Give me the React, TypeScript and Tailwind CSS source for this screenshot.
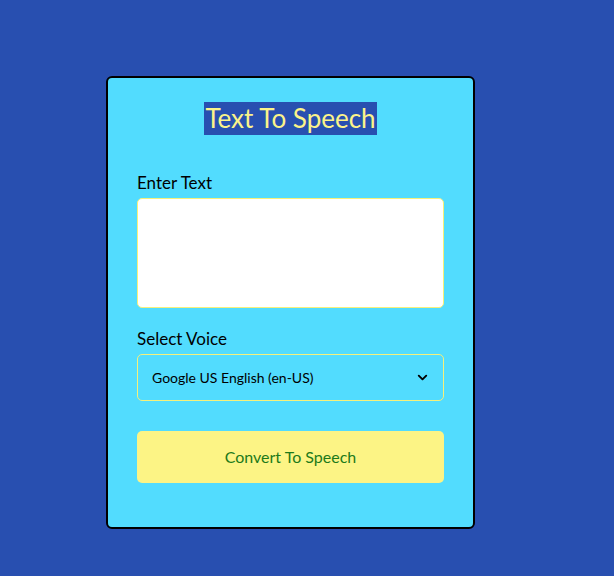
import { ChevronDown } from "lucide-react";

export default function App() {
  return (
    <div
      className="min-h-screen w-full bg-[#284fb0] pt-[76px] pl-[106px]"
      style={{ fontFamily: "Lato, 'Noto Sans', sans-serif" }}
    >
      <div className="w-[369px] rounded-[6px] border-2 border-black bg-[#52dcfe] px-[29px] pt-[24px] pb-[44px]">
        <div className="flex justify-center">
          <h1 className="bg-[#284fb0] px-[1px] text-[26px] leading-[33px] text-[#fbf38a]">
            Text To Speech
          </h1>
        </div>

        <label className="mt-[36px] block text-[17px] leading-[24px] text-black">
          Enter Text
        </label>
        <textarea className="mt-[3px] block h-[110px] w-full resize-none rounded-[5px] border border-[#f6f07a] bg-white" />

        <label className="mt-[19px] block text-[17px] leading-[24px] text-black">
          Select Voice
        </label>
        <div className="mt-[3px] flex h-[47px] w-full items-center justify-between rounded-[5px] border border-[#f6f07a] pl-[14px] pr-[13px] text-[14px] text-black">
          <span>Google US English (en-US)</span>
          <ChevronDown size={15} strokeWidth={3} />
        </div>

        <button className="mt-[30px] flex h-[52px] w-full items-center justify-center rounded-[5px] bg-[#fcf485] text-[16px] text-[#1d7a1a]">
          Convert To Speech
        </button>
      </div>
    </div>
  );
}
